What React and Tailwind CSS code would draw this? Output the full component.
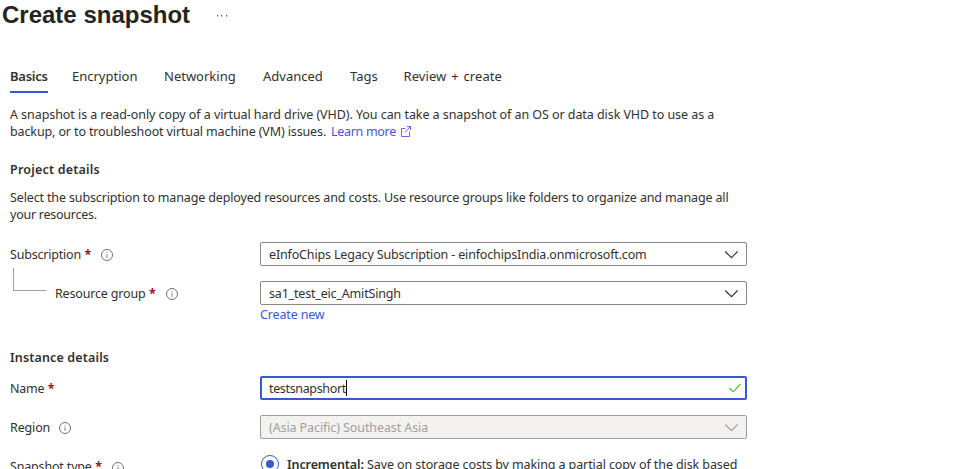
import React from 'react';

function Info({ className = 'ml-[10.5px]' }) {
  return (
    <svg className={`mt-[2px] block h-3 w-3 shrink-0 ${className}`} viewBox="0 0 12 12" fill="none" stroke="#6b6967">
      <circle cx="6" cy="6" r="5.5" strokeWidth="0.95" />
      <path d="M6 5v4M6 3v1" strokeWidth="1" stroke="#8a8886" />
    </svg>
  );
}

function Chevron({ className }) {
  return (
    <svg className={`block h-[9px] w-[14px] ${className}`} viewBox="0 0 14 9" fill="none" stroke="currentColor" strokeWidth="1.1">
      <path d="M1.2 1.5 7.5 7.7 13.6 1.5" />
    </svg>
  );
}

function Star() {
  return <span className="ml-[3.5px] w-[6px] font-bold text-[#a80f22]">*</span>;
}

function Select({ children, disabled }) {
  return (
    <div
      className={`flex h-6 w-[487px] items-center justify-between rounded-[2px] border pr-2 pl-2 ${
        disabled ? 'border-[#a19f9d] bg-[#f3f2f1] text-[#a19f9d]' : 'border-[#8a8886] bg-white'
      }`}
    >
      {children}
      <Chevron className={disabled ? 'text-[#a19f9d]' : 'text-[#323130]'} />
    </div>
  );
}

const tabs = [
  { label: 'Encryption', style: 'w-[92px]' },
  { label: 'Networking', style: 'w-[99px]' },
  { label: 'Advanced', style: 'w-[87px]' },
  { label: 'Tags', style: 'w-[53px]' },
  { label: 'Review + create', style: 'w-[110px] tracking-[0.07px] [word-spacing:1.4px] pl-[0.5px]' },
];

export default function App() {
  return (
    <main className="h-[469px] w-[959px] overflow-hidden bg-white font-['Noto_Sans',sans-serif] text-[12.5px] leading-[17px] whitespace-nowrap text-[#323130]">
      <header className="flex h-[30px] items-center pl-[2px]">
        <h1 className="w-[214px] font-['Liberation_Sans',sans-serif] text-2xl font-bold text-[#252423]">Create snapshot</h1>
        <svg className="mt-px h-[2px] w-3" viewBox="0 0 12 2" fill="#605e5c">
          <path d="M1 0h1.2v1.6H1zM5 0h1.2v1.6H5zM10 0h1.2v1.6h-1.2z" />
        </svg>
      </header>
      <nav className="mt-[38px] flex h-[25px] pl-[10px] text-[13px]">
        <div className="mr-6 h-[25px] w-[38px] border-b-2 border-[#3657d6] font-semibold tracking-[-0.25px]">Basics</div>
        {tabs.map((tab) => (
          <div key={tab.label} className={tab.style}>{tab.label}</div>
        ))}
      </nav>
      <section className="pt-[13px] pl-[10px]">
        <p className="tracking-[-0.065px]">A snapshot is a read-only copy of a virtual hard drive (VHD). You can take a snapshot of an OS or data disk VHD to use as a</p>
        <div className="flex items-center">
          <p className="w-[321px] tracking-[-0.125px]">backup, or to troubleshoot virtual machine (VM) issues.</p>
          <a className="w-[69px] tracking-[-0.3px] text-[#4257d6]">Learn more</a>
          <svg className="h-[11px] w-[11px]" viewBox="0 0 11 11" fill="none" stroke="#7547e0" strokeWidth="0.9">
            <path d="M5.5 2.5h-4v8h8v-5M7 .5h3.5V4M10.5.5 5 6.5" />
          </svg>
        </div>
        <h2 className="mt-[21px] font-semibold tracking-[0.2px]">Project details</h2>
        <p className="mt-[11px] tracking-[-0.14px]">Select the subscription to manage deployed resources and costs. Use resource groups like folders to organize and manage all</p>
        <p className="tracking-[-0.25px]">your resources.</p>
      </section>
      <section className="pt-[19px] pl-[10px]">
        <div className="flex h-6 items-center">
          <div className="flex w-[250px] items-center"><span className="tracking-[-0.2px]">Subscription</span><Star /><Info /></div>
          <Select><span className="tracking-[-0.16px]">eInfoChips Legacy Subscription - einfochipsIndia.onmicrosoft.com</span></Select>
        </div>
        <div className="mt-[2px] flex h-[37px] items-end">
          <div className="flex w-[250px] items-end">
            <div className="mr-[9px] mb-[14px] ml-[3px] h-[23px] w-[33px] border-b border-l border-[#a19f9d]" />
            <div className="flex h-6 items-center"><span className="tracking-[-0.17px]">Resource group</span><Star /><Info /></div>
          </div>
          <Select><span className="tracking-[-0.18px]">sa1_test_eic_AmitSingh</span></Select>
        </div>
        <a className="mt-px ml-[250px] block tracking-[-0.15px] text-[#4257d6]">Create new</a>
      </section>
      <section className="pt-[26px] pl-[10px]">
        <h2 className="font-semibold tracking-[0.15px]">Instance details</h2>
        <div className="mt-[10px] flex h-6 items-center">
          <div className="flex w-[250px] items-center"><span className="tracking-[-0.25px]">Name</span><Star /></div>
          <div className="flex h-6 w-[487px] items-center rounded-[2px] border-2 border-[#3657d6] pr-[4px] pl-[7px]">
            <span className="tracking-[-0.35px]">testsnapshort</span>
            <span className="h-4 w-px bg-black" />
            <svg className="ml-auto h-[10px] w-3" viewBox="0 0 12 10" fill="none" stroke="#5bc236" strokeWidth="1.2">
              <path d="M.5 5.2 4.2 8.8 11.6 1" />
            </svg>
          </div>
        </div>
        <div className="mt-[15px] flex h-6 items-center">
          <div className="flex w-[250px] items-center"><span className="tracking-[-0.15px]">Region</span><Info className="ml-[9px]" /></div>
          <Select disabled><span className="tracking-[-0.1px]">(Asia Pacific) Southeast Asia</span></Select>
        </div>
        <div className="mt-[16px] flex items-start">
          <div className="mt-[3px] flex w-[251px] items-center"><span className="tracking-[-0.17px]">Snapshot type</span><Star /><Info /></div>
          <div className="flex h-[18px] w-[18px] items-center justify-center rounded-full border border-[#3657d6]">
            <div className="h-2 w-2 rounded-full bg-[#3657d6]" />
          </div>
          <p className="mt-px ml-2"><b className="font-semibold tracking-[-0.1px]">Incremental:</b> <span className="tracking-[-0.1px]">Save on storage costs by making a partial copy of the disk based</span></p>
        </div>
      </section>
    </main>
  );
}
